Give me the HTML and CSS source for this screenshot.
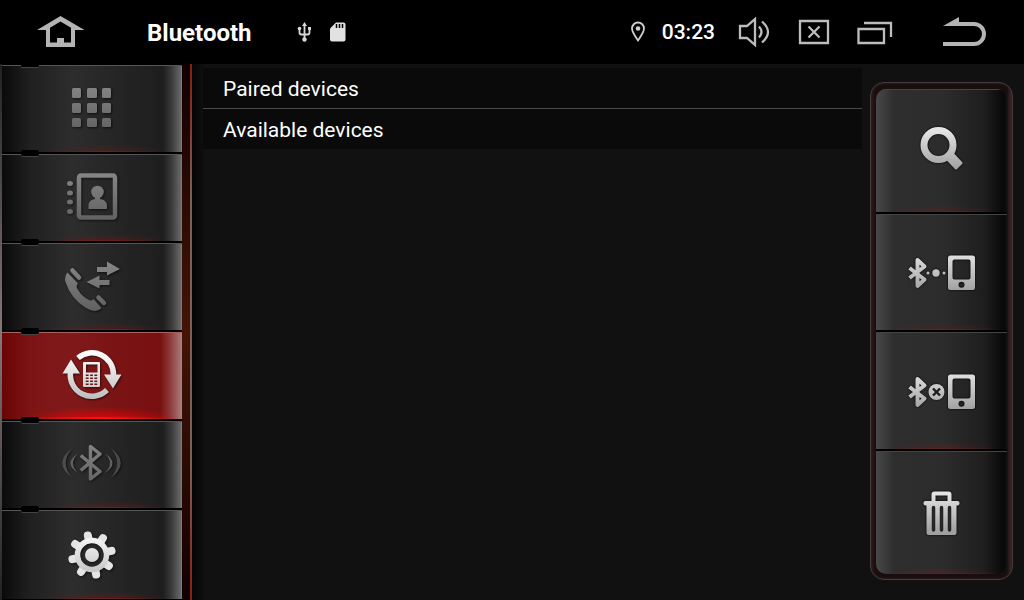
FILE: index.html
```html
<!DOCTYPE html>
<html lang="en">
<head>
    <meta charset="UTF-8">
    <meta name="viewport" content="width=device-width, initial-scale=1.0">
    <title>Bluetooth</title>
    <link rel="stylesheet" href="styles.css">
</head>
<body>
    <!-- Shared icon gradients and symbols -->
    <svg class="defs" width="0" height="0" aria-hidden="true">
        <defs>
            <linearGradient id="dim" gradientUnits="userSpaceOnUse" x1="0" y1="0" x2="0" y2="60">
                <stop offset="0.1" stop-color="#858585"/>
                <stop offset="0.9" stop-color="#606060"/>
            </linearGradient>
            <linearGradient id="bright" gradientUnits="userSpaceOnUse" x1="0" y1="0" x2="0" y2="60">
                <stop offset="0.1" stop-color="#ffffff"/>
                <stop offset="0.9" stop-color="#bcbcbc"/>
            </linearGradient>
            <linearGradient id="silver" gradientUnits="userSpaceOnUse" x1="0" y1="0" x2="0" y2="48">
                <stop offset="0.1" stop-color="#e4e4e4"/>
                <stop offset="0.9" stop-color="#a0a0a0"/>
            </linearGradient>
        </defs>
        <symbol id="bt-phone" viewBox="0 0 72 48">
            <path d="M4.5 20 L19.5 31.5 L12.5 38 V12 L19.5 18.5 L4.5 30" fill="none" stroke="url(#silver)" stroke-width="4" stroke-linejoin="round"/>
            <path fill="url(#silver)" fill-rule="evenodd" d="M45.500 7.500H67.500A2.500 2.500 0 0 1 70 10V39.500A2.500 2.500 0 0 1 67.500 42H45.500A2.500 2.500 0 0 1 43 39.500V10A2.500 2.500 0 0 1 45.500 7.500Z M49.500 11.500A2 2 0 0 0 47.500 13.500V29.500A2 2 0 0 0 49.500 31.500H63.500A2 2 0 0 0 65.500 29.500V13.500A2 2 0 0 0 63.500 11.500Z M53.500 36.700a3 3 0 1 0 6 0a3 3 0 1 0 -6 0Z"/>
        </symbol>
    </svg>

    <!-- Status bar -->
    <header class="status-bar">
        <button class="home" aria-label="Home">
            <svg width="48" height="34" viewBox="0 0 48 34">
                <path fill="#b4b4b4" fill-rule="evenodd" d="M23.500 1L47.500 15H38V32H9V15H0Z M23.500 6.500L13 12.800V27.500H20V23H27V27.500H34V12.800Z"/>
            </svg>
        </button>
        <h1>Bluetooth</h1>
        <div class="status-left">
            <svg width="16" height="22" viewBox="0 0 16 22" fill="none" stroke="#d8d8d8" stroke-width="1.800">
                <path d="M7.500 4V18 M2.500 8V11.500Q2.500 13.500 4.500 13.500H10.500Q12.500 13.500 12.500 11.500V8"/>
                <path d="M7.500 1L10 5H5Z M11 6h3v3h-3Z" fill="#d8d8d8" stroke="none"/>
                <circle cx="2.500" cy="7.500" r="1.800" fill="#d8d8d8" stroke="none"/>
                <circle cx="7.500" cy="18.500" r="2.200" fill="#d8d8d8" stroke="none"/>
            </svg>
            <svg width="18" height="22" viewBox="0 0 18 22">
                <path fill="#e2e2e2" d="M7 1.500H14.500A2 2 0 0 1 16.500 3.500V18.500A2 2 0 0 1 14.500 20.500H3A2 2 0 0 1 1 18.500V7.500Z"/>
                <path stroke="#000" stroke-width="1.500" d="M7.500 3V7M10.500 3V7M13.500 3V7"/>
            </svg>
        </div>
        <div class="status-right">
            <svg width="16" height="22" viewBox="0 0 16 22">
                <path fill="none" stroke="#cfcfcf" stroke-width="1.800" d="M8 19.500C5 15 2 11 2 7.500A6 6 0 0 1 14 7.500C14 11 11 15 8 19.500Z"/>
                <circle cx="8" cy="7.500" r="2.300" fill="#cfcfcf"/>
            </svg>
            <time>03:23</time>
            <button class="volume" aria-label="Volume">
                <svg width="34" height="30" viewBox="0 0 34 30" fill="none" stroke="#bdbdbd" stroke-width="2.300">
                    <path d="M3 9H10L18 2V28L10 21H3Z"/>
                    <path d="M22 9.500Q27 15 22 20.500 M25 4.500Q37 15 25 25.500"/>
                </svg>
            </button>
            <button class="close" aria-label="Close">
                <svg width="34" height="30" viewBox="0 0 34 30" fill="none" stroke="#bdbdbd" stroke-width="2.300">
                    <path d="M3 4H31V26H3Z M11.500 9.500L22.500 20.500M22.500 9.500L11.500 20.500"/>
                </svg>
            </button>
            <button class="recents" aria-label="Recent apps">
                <svg width="36" height="30" viewBox="0 0 36 30" fill="none" stroke="#bdbdbd" stroke-width="2.300">
                    <path d="M1.500 12H27V26H1.500Z M7 6H34V20"/>
                </svg>
            </button>
            <button class="back" aria-label="Back">
                <svg width="46" height="34" viewBox="0 0 46 34">
                    <path fill="none" stroke="#b4b4b4" stroke-width="4" d="M8 9H32A10 10 0 0 1 32 29H1"/>
                    <path fill="#b4b4b4" d="M1 11L17 2V11Z"/>
                </svg>
            </button>
        </div>
    </header>

    <div class="screen">
        <!-- Side tabs -->
        <nav class="sidebar">
            <button class="tab" aria-label="Dial pad">
                <svg width="60" height="60" viewBox="0 0 60 60" fill="url(#dim)">
                    <rect x="10" y="9" width="9" height="10" rx="1.500"/>
                    <rect x="25" y="9" width="10" height="10" rx="1.500"/>
                    <rect x="40" y="9" width="9" height="10" rx="1.500"/>
                    <rect x="10" y="24" width="9" height="10" rx="1.500"/>
                    <rect x="25" y="24" width="10" height="10" rx="1.500"/>
                    <rect x="40" y="24" width="9" height="10" rx="1.500"/>
                    <rect x="10" y="39" width="9" height="9" rx="1.500"/>
                    <rect x="25" y="39" width="10" height="9" rx="1.500"/>
                    <rect x="40" y="39" width="9" height="9" rx="1.500"/>
                </svg>
            </button>
            <button class="tab" aria-label="Contacts">
                <svg width="60" height="60" viewBox="0 0 60 60" fill="url(#dim)">
                    <rect x="17" y="7.500" width="36" height="42" rx="2" fill="none" stroke="url(#dim)" stroke-width="4.500"/>
                    <ellipse cx="8" cy="15.500" rx="3" ry="2.500"/>
                    <ellipse cx="8" cy="25" rx="3" ry="2.500"/>
                    <ellipse cx="8" cy="34" rx="3" ry="2.500"/>
                    <ellipse cx="8" cy="43.500" rx="3" ry="2.500"/>
                    <circle cx="35.500" cy="24" r="6.300"/>
                    <path d="M33 28H38V31Q45 32 45 37.500V41H26.500V37.500Q26.500 32 33 31Z"/>
                </svg>
            </button>
            <button class="tab" aria-label="Call log">
                <svg width="60" height="60" viewBox="0 0 60 60" fill="url(#dim)">
                    <path d="M5.500 15.500L16 26.500Q13.500 29 15.500 32Q20 40 28 43.500Q30 44 31.500 42L39.500 51Q34 57 24 51Q9 42 3.500 25Q2 19 5.500 15.500Z"/>
                    <path stroke="url(#dim)" stroke-width="4.500" stroke-linecap="round" d="M10.500 13.500L17 20.500M36.500 40.500L42 46"/>
                    <path d="M35 10H45V4.500L58 12L45 18.500V15H35Z M47.500 23H37.500V18.500L24.500 25L37.500 31.500V28H47.500Z"/>
                </svg>
            </button>
            <button class="tab active" aria-label="Sync phone book">
                <svg width="60" height="60" viewBox="0 0 60 60" fill="url(#bright)">
                    <path fill="none" stroke="url(#bright)" stroke-width="5.500" d="M16 12A21.500 21.500 0 0 1 51.500 29M8.500 26A21.500 21.500 0 0 0 45 44"/>
                    <path d="M42 28.500H59.500L51 42.500Z M0.500 27.500H18L9 13.500Z"/>
                    <path fill-rule="evenodd" d="M22 16H37A1 1 0 0 1 38 17V40A1 1 0 0 1 37 41H22A1 1 0 0 1 21 40V17A1 1 0 0 1 22 16Z M24 18.500V26.500H35.500V18.500Z"/>
                    <path stroke="#6d1414" stroke-width="1.600" stroke-dasharray="2.800 1.500" d="M23.800 29.300H35.500M23.800 32.300H35.500M23.800 35.300H35.500M23.800 38.300H35.500"/>
                </svg>
            </button>
            <button class="tab" aria-label="Bluetooth audio">
                <svg width="60" height="60" viewBox="0 0 60 60">
                    <path fill="none" stroke="url(#dim)" stroke-width="3.500" stroke-linejoin="round" d="M18.800 20.500L38 36.500L28.500 44V11.500L38 19L18.800 35.500"/>
                    <path fill="#626262" d="M16 18.500Q1 28 16 38Q6 28 16 18.500Z M43 18.500Q58 28 43 38Q53 28 43 18.500Z"/>
                    <path fill="#4c4c4c" d="M10.500 13Q-10 28 10.500 43Q-3 28 10.500 13Z M48.500 13Q69 28 48.500 43Q62 28 48.500 13Z"/>
                </svg>
            </button>
            <button class="tab" aria-label="Settings">
                <svg width="60" height="60" viewBox="0 0 60 60">
                    <g transform="translate(30 30) rotate(-12)">
                        <path stroke="#e4e4e4" stroke-width="8" stroke-linecap="round" d="M0 -20V-16M0 20V16M20 0H16M-20 0H-16M14.200 -14.200L11.500 -11.500M14.200 14.200L11.500 11.500M-14.200 -14.200L-11.500 -11.500M-14.200 14.200L-11.500 11.500"/>
                    </g>
                    <circle cx="30" cy="30" r="14.500" fill="none" stroke="url(#bright)" stroke-width="5.500"/>
                    <circle cx="30" cy="30" r="7" fill="url(#bright)"/>
                </svg>
            </button>
        </nav>
        <div class="rail"></div>

        <!-- Device list -->
        <main class="content">
            <section class="devices">
                <h2>Paired devices</h2>
                <h2>Available devices</h2>
            </section>

            <!-- Device actions -->
            <div class="actions">
                <button aria-label="Search">
                    <svg width="72" height="48" viewBox="0 0 72 48" stroke="url(#silver)" fill="none">
                        <circle cx="33.500" cy="19" r="14.500" stroke-width="7"/>
                        <path stroke-width="7" stroke-linejoin="round" d="M44 30L52 38"/>
                        <path stroke-width="3" stroke-linejoin="round" fill="url(#silver)" d="M43 33.500L48 28.500L56 37L51 42Z"/>
                    </svg>
                </button>
                <button aria-label="Connect">
                    <svg width="72" height="48" viewBox="0 0 72 48" fill="url(#silver)">
                        <use href="#bt-phone"/>
                        <circle cx="23" cy="25" r="1.500"/>
                        <circle cx="31" cy="25" r="3.700"/>
                        <circle cx="39" cy="25" r="1.500"/>
                    </svg>
                </button>
                <button aria-label="Disconnect">
                    <svg width="72" height="48" viewBox="0 0 72 48" fill="url(#silver)">
                        <use href="#bt-phone"/>
                        <circle cx="31.500" cy="25" r="8"/>
                        <path stroke="#1c1c1c" stroke-width="2.400" d="M28 21.500L35 28.500M35 21.500L28 28.500"/>
                    </svg>
                </button>
                <button aria-label="Delete">
                    <svg width="72" height="48" viewBox="0 0 72 48" fill="url(#silver)">
                        <path fill="none" stroke="url(#silver)" stroke-width="4" stroke-linejoin="round" d="M28.500 13V5.500Q28.500 4.500 29.500 4.500H43.500Q44.500 4.500 44.500 5.500V13"/>
                        <rect x="18.500" y="12" width="36" height="4.500" rx="2"/>
                        <path d="M21.500 15H51.500V43.500Q51.500 46 49 46H24Q21.500 46 21.500 43.500Z"/>
                        <path stroke="#262626" stroke-width="3.500" stroke-linecap="round" d="M28.500 18.500V41M36.500 18.500V41M44.500 18.500V41"/>
                    </svg>
                </button>
            </div>
        </main>
    </div>
</body>
</html>
```

FILE: styles.css
```css
* {
    box-sizing: border-box;
}

body {
    margin: 0;
    min-height: 100vh;
    display: flex;
    flex-direction: column;
    background-color: #111;
    color: #fff;
    font-family: Roboto, "Liberation Sans", sans-serif;
}

h1, h2 {
    margin: 0;
}

button {
    display: flex;
    align-items: center;
    justify-content: center;
    margin: 0;
    padding: 0;
    border: none;
    background: none;
    cursor: pointer;
}

svg {
    display: block;
}

.defs {
    position: absolute;
}

/* Status bar */
.status-bar {
    display: flex;
    align-items: center;
    height: 64px;
    background-color: #000;
}

.home {
    width: 122px;
    height: 64px;
}

.status-bar h1 {
    margin-left: 25px;
    padding-top: 2px;
    font-size: 24px;
    font-weight: 700;
}

.status-left {
    display: flex;
    gap: 16px;
    margin-left: 45px;
}

.status-right {
    display: flex;
    align-items: center;
    margin-left: auto;
    padding-right: 36px;
}

.status-right time {
    margin: 0 22px 0 16px;
    font-size: 21px;
    font-weight: 500;
}

.close,
.recents {
    margin-left: 26px;
}

.back {
    margin-left: 49px;
}

.screen {
    flex: 1;
    display: flex;
}

/* Side tabs */
.sidebar {
    flex: none;
    display: grid;
    grid-template-rows: repeat(5, 89fr) 91fr;
    width: 182px;
    padding-left: 2px;
    background: linear-gradient(#222, #857878 50%, #222);
}

.tab {
    position: relative;
    border: solid #000;
    border-width: 1px 0;
    background:
        linear-gradient(#555, #555) top / 100% 1px no-repeat,
        radial-gradient(ellipse 50% 100% at 50% 100%, #8a1c1c, transparent) 80% 100% / 130px 1px no-repeat,
        radial-gradient(ellipse 50% 100% at 50% 100%, rgba(130, 20, 20, 0.4), transparent) 80% 100% / 130px 7px no-repeat,
        linear-gradient(to right, #0a0a0a, #202020 28px, #2d2d2d 70px, #252525 115px, #1e1e1e 161px, #383838 169px, #6a6a6a 179px, #888 180px);
    overflow: visible;
}

/* Notch over the seam between two tabs */
.tab::before {
    content: "";
    position: absolute;
    top: -4px;
    left: 19px;
    width: 18px;
    height: 6px;
    border-radius: 2px;
    background-color: #000;
    box-shadow: 0 1px 0 #444;
}

.tab:first-child::before {
    top: -1px;
    height: 3px;
}

.tab.active {
    background:
        linear-gradient(#a86060, #a86060) top / 100% 1px no-repeat,
        linear-gradient(to right, transparent, #ff1010 50%, transparent) 80% 100% / 150px 2px no-repeat,
        radial-gradient(ellipse 50% 100% at 50% 100%, rgba(240, 0, 0, 0.85), transparent) 90% 100% / 160px 12px no-repeat,
        linear-gradient(to right, #6a0505, #7c1414 28px, #801a1a 70px, #7a1414 115px, #781010 158px, #8c3434 167px, #a87878 179px, #b08888 180px);
}

.tab svg {
    filter: drop-shadow(1px 1px 1px rgba(0, 0, 0, 0.6));
}

.rail {
    flex: none;
    width: 10px;
    border-right: 2px solid;
    border-image: linear-gradient(#861e10, #7a6058 25%, #7a6058 75%, #861e10) 1;
    background: linear-gradient(#100000, #441406 50%, #100000);
}

/* Content */
.content {
    flex: 1;
    display: flex;
    gap: 8px;
    padding-right: 11px;
    padding-left: 11px;
    background: linear-gradient(to right, #050505, #111 14px);
}

.devices {
    flex: 1;
    padding-top: 4px;
}

.devices h2 {
    padding-top: 2px;
    padding-left: 20px;
    background-color: #0a0a0a;
    font-size: 21px;
    font-weight: 400;
    line-height: 38px;
}

.devices h2 + h2 {
    border-top: 1px solid #484848;
}

/* Device actions */
.actions {
    display: grid;
    grid-template-rows: 125fr 119fr 119fr 123fr;
    width: 143px;
    margin: 18px 0 20px;
    padding: 6px 5px 5px;
    border: 1px solid #453c3c;
    border-radius: 14px;
    background: linear-gradient(to right, #2c1818, #180e0e 5px, #180e0e 136px, #483232);
    box-shadow: inset 0 0 2px 1px #2c1c1c;
}

.actions button {
    padding-right: 2px;
    border-bottom: 2px solid #000;
    background:
        linear-gradient(#555, #333) top / 100% 1px no-repeat,
        radial-gradient(ellipse 50% 100% at 50% 100%, #6c2020, transparent) bottom / 100% 1px no-repeat,
        radial-gradient(ellipse 50% 100% at 50% 100%, rgba(120, 25, 25, 0.35), transparent) bottom / 120px 7px no-repeat,
        linear-gradient(to right, #484848, #404040 6px, #2e2e2e 18px, #2c2c2c 68px, #1e1e1e 108px, #080808 128px, #101010);
}

.actions button:first-child {
    border-radius: 10px 10px 0 0;
}

.actions button:last-child {
    border-bottom: none;
    border-radius: 0 0 10px 10px;
}

.actions svg {
    filter: drop-shadow(0 0 1px #000);
}
```
